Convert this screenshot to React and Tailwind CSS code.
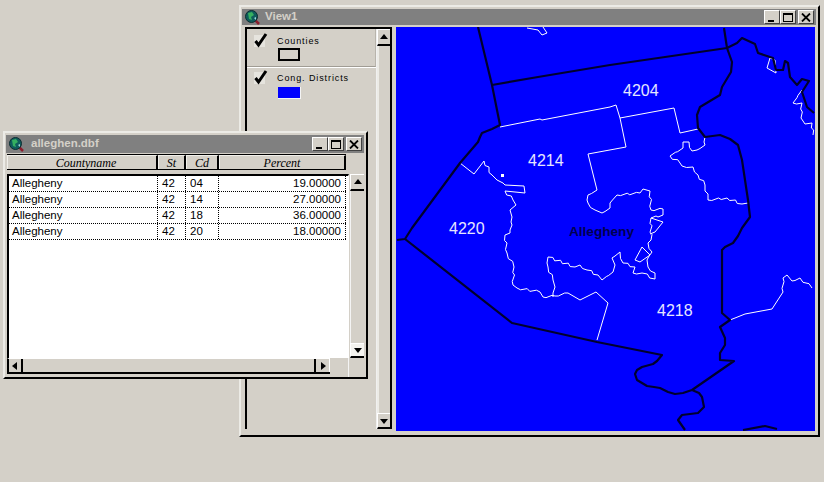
const sans = "font-['Liberation_Sans',Arial,sans-serif]"

// county boundaries, page coordinates
const blackLines = [
  "478,27 492,85 500,125 492,129 482,133 480,137 478,142 460,163 412,228 405,239 397,240",
  "405,239 512,323 597,342 662,355 657,361 653,364 642,367 637,370 635,374 637,380 647,386 654,387 660,388 668,392 675,394 683,393 692,390 734,361 720,360 720,353 725,345 725,338 720,327 730,320 722,313 722,250 725,247 733,243 738,236 742,228 750,217 748,200 742,160 738,145 730,139 720,135 705,137 698,128 697,115 700,107 710,101 720,95 722,87 731,72 732,62 727,48 724,28",
  "692,390 699,393 702,397 704,407 698,413 682,415 678,420 685,430",
  "743,430 765,426 777,429",
  "492,85 538,77 610,65 727,48 737,43 742,38 755,44 758,53 773,58 776,70 783,70 785,61 788,63 790,77 797,85 802,79 809,81 802,92 807,107 814,113",
]

// district boundaries that run straight
const straightLines = [
  "500,127 540,119 542,120 610,107 616,105 620,118 626,147 588,154 597,190",
  "620,118 674,108 680,133 698,129",
  "460,163 474,174 484,161",
  "568,293 580,300 596,292 608,303 597,340",
  "642,247 650,255 640,262 635,260 642,247",
  "767,68 770,58 775,60 776,73 767,68",
  "527,28 538,30 542,35 547,33 543,27",
  "730,320 745,314 772,309 783,292",
  "503,183 505,185 524,186 525,193 505,191",
  "651,218 663,222 655,232 650,234",
]

// river edges, roughened below
const raggedLines = [
  "597,190 588,195 588,203 595,210 602,213 610,208 610,203 617,195 640,193 643,189 650,191 651,210 663,209 663,215 651,218 651,240 648,243 652,252 647,260 648,267 655,273 655,279 642,273 633,273 635,267 623,263 620,252 612,258 615,265 613,272 602,280 598,275 587,270 580,265 575,267 548,257 548,267 553,280 555,287 553,297",
  "705,137 705,145 697,150 692,151 689,142 683,142 683,148 670,156 680,163 682,166 693,167 698,175 705,185 708,200 727,198 742,204 748,203",
  "484,161 492,175 497,180 503,183",
  "505,191 513,200 516,205 510,210 512,217 512,225 510,233 505,235 507,253 514,267 513,285 517,288 540,292 543,297 555,296 568,293",
  "802,90 793,103 802,103 801,118 805,124 812,123 813,135",
  "783,292 783,278 787,275 792,281 800,278 812,288",
]

// break long segments into small steps so the line looks hand digitised
const roughen = (pts) => {
  const list = pts.split(" ").map((p) => p.split(",").map(Number))
  const out = []
  list.forEach(([x, y], i) => {
    out.push(`${x},${y}`)
    const next = list[i + 1]
    if (!next) return
    const steps = Math.floor(Math.hypot(next[0] - x, next[1] - y) / 4)
    for (let s = 1; s < steps; s++) {
      const t = s / steps
      const off = s % 2 === 0 ? 1 : -1
      out.push(`${x + (next[0] - x) * t + off},${y + (next[1] - y) * t - off}`)
    }
  })
  return out.join(" ")
}

const mapLabels = [
  { text: "4204", x: 623, y: 96 },
  { text: "4214", x: 528, y: 166 },
  { text: "4220", x: 449, y: 234 },
  { text: "4218", x: 657, y: 316 },
]

const rows = [
  { name: "Allegheny", st: "42", cd: "04", pct: "19.00000" },
  { name: "Allegheny", st: "42", cd: "14", pct: "27.00000" },
  { name: "Allegheny", st: "42", cd: "18", pct: "36.00000" },
  { name: "Allegheny", st: "42", cd: "20", pct: "18.00000" },
]

const AppIcon = () => (
  <svg width="17" height="17" viewBox="0 0 17 17" className="shrink-0">
    <path d="M10 10 L15 15" stroke="#8a1c2c" strokeWidth="2.5" />
    <circle cx="7.5" cy="7.5" r="6" fill="#0f5c5c" stroke="#0b2c30" />
    <path d="M4 4 L8 3 L10 6 L7 8 L8 11 L5 10 Z" fill="#35b060" />
    <path d="M10 9 L12 8 L12 11 Z" fill="#9fd8e0" />
  </svg>
)

const Arrow = ({ dir }) => {
  const points = {
    up: "1,7 9,7 5,2",
    down: "1,3 9,3 5,8",
    left: "7,1 7,9 2,5",
    right: "3,1 3,9 8,5",
  }[dir]
  return (
    <svg width="10" height="10" viewBox="0 0 10 10">
      <polygon points={points} fill="#000" />
    </svg>
  )
}

const ScrollButton = ({ dir, className = "" }) => (
  <div className={`flex items-center justify-center shrink-0 border-t border-l border-t-white border-l-white border-b-2 border-b-black ${className}`}>
    <Arrow dir={dir} />
  </div>
)

const WinButton = ({ kind }) => (
  <div className="w-[16px] h-[14px] bg-[#d4d0c8] border-t border-l border-t-white border-l-white border-b border-r border-b-[#404040] border-r-[#404040] flex items-center justify-center">
    {kind === "min" && <div className="w-[6px] h-[2px] bg-black mt-[7px] mr-[3px]" />}
    {kind === "max" && <div className="w-[10px] h-[9px] border border-black border-t-2" />}
    {kind === "close" && (
      <svg width="10" height="9" viewBox="0 0 10 9">
        <path d="M1 0.5 L9 8.5 M9 0.5 L1 8.5" stroke="#000" strokeWidth="1.8" />
      </svg>
    )}
  </div>
)

const TitleBar = ({ title, gap, className = "" }) => (
  <div className={`flex items-center bg-[#808080] ${className}`}>
    <div className="ml-[2px]"><AppIcon /></div>
    <span className={`${sans} ${gap} text-[11.5px] font-bold text-[#d4d0c8] leading-none`}>{title}</span>
    <div className="ml-auto flex mr-[2px]">
      <WinButton kind="min" />
      <WinButton kind="max" />
      <div className="w-[2px]" />
      <WinButton kind="close" />
    </div>
  </div>
)

const Check = () => (
  <svg width="15" height="15" viewBox="0 0 15 15" className="shrink-0">
    <rect x="1" y="2" width="11" height="12" fill="#e6e4de" />
    <path d="M2.5 8 L5.5 12 L13 1" fill="none" stroke="#000" strokeWidth="3" />
  </svg>
)

const LegendEntry = ({ label, swatch, className = "" }) => (
  <div className={`flex pl-[6px] ${className}`}>
    <Check />
    <div className="ml-[9px] pt-[1px]">
      <div className={`${sans} text-[9px] tracking-[0.9px] text-black leading-[14px] whitespace-nowrap`}>{label}</div>
      {swatch}
    </div>
  </div>
)

const Legend = () => (
  <div className="w-[147px] shrink-0 flex border-t-2 border-l-2 border-t-black border-l-black border-r-2 border-r-black">
    <div className="w-[129px] shrink-0">
      <LegendEntry
        label="Counties"
        className="h-[38px] pt-[4px] border-b border-b-[#a09c94] border-r border-r-[#b8b4ac]"
        swatch={<div className="ml-[1px] w-[22px] h-[13px] border-2 border-black" />}
      />
      <LegendEntry
        label="Cong. Districts"
        className="h-[36px] pt-[2px] border-t border-t-white"
        swatch={<div className="ml-[1px] mt-[2px] w-[23px] h-[12px] bg-[#0000ff] border-b border-r border-[#f4f4f4]" />}
      />
    </div>
    <div className="flex-1 flex flex-col border-l border-l-[#f0f0f0]">
      <ScrollButton dir="up" className="h-[17px]" />
      <div className="flex-1 border-l-2 border-l-[#ecebe6]" />
      <ScrollButton dir="down" className="h-[16px]" />
    </div>
  </div>
)

const MapView = () => (
  <svg viewBox="396 27 419 404" className="w-[419px] h-[404px] shrink-0 bg-[#0000ff] block">
    {straightLines.map((pts, i) => (
      <polyline key={i} points={pts} fill="none" stroke="#fff" strokeWidth="1" />
    ))}
    {raggedLines.map((pts, i) => (
      <polyline key={i} points={roughen(pts)} fill="none" stroke="#fff" strokeWidth="1" />
    ))}
    {blackLines.map((pts, i) => (
      <polyline key={i} points={pts} fill="none" stroke="#00002e" strokeWidth="2.2" strokeLinejoin="round" />
    ))}
    <rect x="501" y="174" width="3" height="3" fill="#fff" />
    {mapLabels.map((l) => (
      <text key={l.text} x={l.x} y={l.y} fill="#e6e6ff" fontSize="16" fontFamily="Liberation Sans, Arial, sans-serif">
        {l.text}
      </text>
    ))}
    <text x="569" y="236" fill="#000050" fontSize="13.6" fontWeight="700" fontFamily="Liberation Sans, Arial, sans-serif">
      Allegheny
    </text>
  </svg>
)

const ViewWindow = () => (
  <div className="absolute left-[239px] top-[5px] w-[581px] h-[432px] bg-[#d4d0c8] border-t-2 border-l-2 border-t-[#ecebe6] border-l-[#ecebe6] border-r-2 border-b-2 border-r-black border-b-black flex flex-col">
    <TitleBar title="View1" gap="ml-[4px]" className="h-[16px] mt-[2px] ml-[1px] mr-[2px] shrink-0" />
    <div className="flex mt-[2px] ml-[4px] mr-[3px] h-[403px] items-start">
      <div className="h-[402px] flex">
        <Legend />
      </div>
      <div className="ml-[4px]">
        <MapView />
      </div>
    </div>
  </div>
)

const HeaderCell = ({ label, className = "" }) => (
  <div className={`${className} h-full flex items-center justify-center border-r-2 border-r-black border-t border-l border-t-[#f0efea] border-l-[#f0efea] font-['Liberation_Serif',serif] italic text-[12px] text-black`}>
    {label}
  </div>
)

const TableWindow = () => (
  <div className="absolute left-[3px] top-[131px] w-[365px] h-[248px] bg-[#d4d0c8] border-t-2 border-l-2 border-t-[#ecebe6] border-l-[#ecebe6] border-r-2 border-b-2 border-r-black border-b-black flex flex-col">
    <TitleBar title="alleghen.dbf" gap="ml-[6px]" className="h-[18px] mt-[2px] ml-[1px] mr-[2px] shrink-0" />

    {/* Column headers */}
    <div className="mt-[1px] ml-[2px] w-[339px] h-[16px] shrink-0 flex border-y border-y-black">
      <HeaderCell label="Countyname" className="w-[151px] pl-[8px]" />
      <HeaderCell label="St" className="w-[28px]" />
      <HeaderCell label="Cd" className="w-[33px]" />
      <HeaderCell label="Percent" className="flex-1" />
    </div>

    {/* Rows and vertical scrollbar */}
    <div className="mt-[4px] ml-[2px] flex h-[184px] shrink-0">
      <div className="w-[342px] bg-white border-t-2 border-l-2 border-t-black border-l-black border-r border-r-white">
        {rows.map((row) => (
          <div key={row.cd} className={`${sans} flex h-[16px] w-[337px] text-[11.5px] leading-[15px] text-black border-b border-dotted border-b-black`}>
            <div className="w-[149px] pl-[3px] border-r border-dotted border-r-black">{row.name}</div>
            <div className="w-[28px] pl-[4px] border-r border-dotted border-r-black">{row.st}</div>
            <div className="w-[33px] pl-[4px] border-r border-dotted border-r-black">{row.cd}</div>
            <div className="flex-1 text-right pr-[4px] border-r border-dotted border-r-black">{row.pct}</div>
          </div>
        ))}
      </div>
      <div className="ml-[1px] w-[14px] flex flex-col">
        <ScrollButton dir="up" className="h-[17px]" />
        <div className="flex-1 border-l border-l-[#f4f4f4]" />
        <ScrollButton dir="down" className="h-[15px] bg-[#f4f3ef]" />
      </div>
    </div>

    {/* Horizontal scrollbar */}
    <div className="ml-[2px] flex flex-1">
      <div className="flex h-[16px] w-[323px] shrink-0 border-t border-t-white border-b-2 border-b-black border-l-2 border-l-black">
        <div className="w-[14px] flex items-center justify-center border-r-2 border-r-black"><Arrow dir="left" /></div>
        <div className="flex-1" />
        <div className="w-[16px] flex items-center justify-center border-l-2 border-l-black border-r border-r-white"><Arrow dir="right" /></div>
      </div>
      <div className="ml-[18px] w-px bg-[#f4f4f4]" />
    </div>
  </div>
)

export default function App() {
  return (
    <div className="relative w-[824px] h-[482px] overflow-hidden bg-[#d4d0c8]">
      <ViewWindow />
      <TableWindow />
    </div>
  )
}
